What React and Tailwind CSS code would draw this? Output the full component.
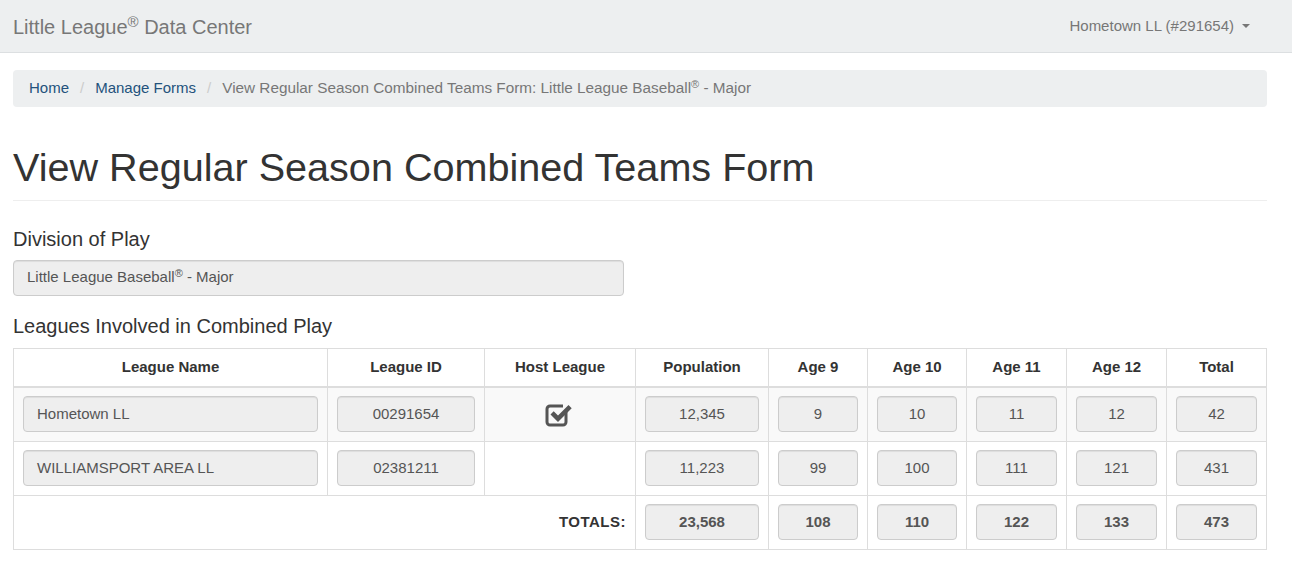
import React from 'react'

const font = { fontFamily: '"Liberation Sans", Arial, sans-serif' }

const rows = [
  { name: 'Hometown LL', id: '00291654', host: true, pop: '12,345', a9: '9', a10: '10', a11: '11', a12: '12', total: '42' },
  { name: 'WILLIAMSPORT AREA LL', id: '02381211', host: false, pop: '11,223', a9: '99', a10: '100', a11: '111', a12: '121', total: '431' },
]

const totals = { pop: '23,568', a9: '108', a10: '110', a11: '122', a12: '133', total: '473' }

const CheckSquare = () => (
  <svg width="30" height="28" viewBox="0 0 30 28">
    <path
      d="M21 12v10a3 3 0 0 1-3 3H5a3 3 0 0 1-3-3V9a3 3 0 0 1 3-3h13"
      fill="none"
      stroke="#555"
      strokeWidth="3"
    />
    <path d="M5.5 14.5l3.2-3.2 4.3 4.3 10.5-10.5 3.2 3.2-13.7 13.7z" fill="#555" />
  </svg>
)

function Box({ children, bold, left }) {
  return (
    <div
      className={`h-[36px] rounded-[4px] border border-[#ccc] bg-[#eee] flex items-center text-[15px] text-[#555] shadow-[inset_0_1px_1px_rgba(0,0,0,0.075)] ${
        left ? 'justify-start pl-[13px]' : 'justify-center'
      } ${bold ? 'font-bold' : ''}`}
    >
      {children}
    </div>
  )
}

export default function App() {
  const th = 'border border-[#ddd] border-b-2 h-[39px] text-[15px] font-bold text-[#333] text-center align-middle'
  const td = 'border border-[#ddd] h-[54px] px-[9px] align-middle'
  return (
    <div style={font} className="min-h-screen bg-white text-[#333]">
      <div className="h-[53px] bg-[#edeff0] border-b border-[#dcdfe1] flex items-center justify-between px-[13px]">
        <div className="text-[20px] text-[#777]">
          Little League<span className="text-[15px] align-[7px]">®</span> Data Center
        </div>
        <div className="flex items-center text-[15px] text-[#777] pr-[29px]">
          Hometown LL (#291654)
          <span className="ml-[8px] inline-block w-0 h-0 border-l-[4px] border-r-[4px] border-t-[4px] border-l-transparent border-r-transparent border-t-[#777]"></span>
        </div>
      </div>

      <div className="px-[13px] pr-[25px] pt-[17px]">
        <div className="h-[37px] bg-[#edeff0] rounded-[4px] flex items-center px-[16px] text-[15px]">
          <span className="text-[#23527c]">Home</span>
          <span className="text-[#ccc] px-[11px]">/</span>
          <span className="text-[#23527c]">Manage Forms</span>
          <span className="text-[#ccc] px-[11px]">/</span>
          <span className="text-[#777] text-[15.3px]">
            View Regular Season Combined Teams Form: Little League Baseball<sup className="text-[11px]">®</sup> - Major
          </span>
        </div>

        <h1 className="text-[39.6px] leading-[1.1] text-[#333] mt-[39px] pb-[10px] border-b border-[#eee]">
          View Regular Season Combined Teams Form
        </h1>

        <div className="text-[20px] text-[#333] mt-[23px]">Division of Play</div>
        <div className="w-[611px] mt-[6px]">
          <Box left>
            <span>
              Little League Baseball<sup className="text-[11px]">®</sup> - Major
            </span>
          </Box>
        </div>

        <div className="text-[20px] text-[#333] mt-[15px]">Leagues Involved in Combined Play</div>

        <table className="w-full border-collapse mt-[7px] table-fixed">
          <colgroup>
            <col style={{ width: 314 }} />
            <col style={{ width: 157 }} />
            <col style={{ width: 151 }} />
            <col style={{ width: 133 }} />
            <col style={{ width: 99 }} />
            <col style={{ width: 99 }} />
            <col style={{ width: 100 }} />
            <col style={{ width: 100 }} />
            <col />
          </colgroup>
          <thead>
            <tr>
              <th className={th}>League Name</th>
              <th className={th}>League ID</th>
              <th className={th}>Host League</th>
              <th className={th}>Population</th>
              <th className={th}>Age 9</th>
              <th className={th}>Age 10</th>
              <th className={th}>Age 11</th>
              <th className={th}>Age 12</th>
              <th className={th}>Total</th>
            </tr>
          </thead>
          <tbody>
            {rows.map((r, i) => (
              <tr key={r.id} className={i === 0 ? 'bg-[#f9f9f9]' : 'bg-white'}>
                <td className={td}><Box left>{r.name}</Box></td>
                <td className={td}><Box>{r.id}</Box></td>
                <td className={td}>
                  <div className="flex justify-center">{r.host ? <CheckSquare /> : null}</div>
                </td>
                <td className={td}><Box>{r.pop}</Box></td>
                <td className={td}><Box>{r.a9}</Box></td>
                <td className={td}><Box>{r.a10}</Box></td>
                <td className={td}><Box>{r.a11}</Box></td>
                <td className={td}><Box>{r.a12}</Box></td>
                <td className={td}><Box>{r.total}</Box></td>
              </tr>
            ))}
            <tr className="bg-white">
              <td colSpan={3} className={`${td} text-right text-[15px] font-bold text-[#333] tracking-[0.5px]`}>TOTALS:</td>
              <td className={td}><Box bold>{totals.pop}</Box></td>
              <td className={td}><Box bold>{totals.a9}</Box></td>
              <td className={td}><Box bold>{totals.a10}</Box></td>
              <td className={td}><Box bold>{totals.a11}</Box></td>
              <td className={td}><Box bold>{totals.a12}</Box></td>
              <td className={td}><Box bold>{totals.total}</Box></td>
            </tr>
          </tbody>
        </table>
      </div>
    </div>
  )
}
